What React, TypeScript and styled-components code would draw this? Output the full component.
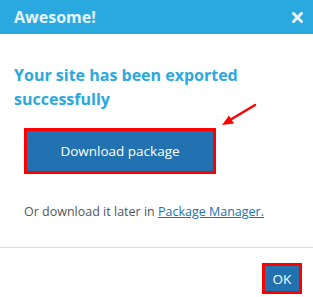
import React from 'react';
import styled, { createGlobalStyle } from 'styled-components';

const GlobalStyle = createGlobalStyle`
  html, body {
    margin: 0;
    padding: 0;
    background: #ffffff;
  }
  body {
    font-family: 'Open Sans', 'Noto Sans', sans-serif;
  }
`;

const Modal = styled.div`
  width: 313px;
  height: 297px;
  background: #ffffff;
  display: flex;
  flex-direction: column;
`;

const Header = styled.header`
  height: 34px;
  flex: none;
  background: #29a9e0;
  display: flex;
  align-items: center;
  justify-content: space-between;
  padding: 0 10px 0 14px;
  box-sizing: border-box;
`;

const Title = styled.h2`
  margin: 0;
  font-size: 16px;
  font-weight: 700;
  color: #e6f4fb;
`;

const CloseButton = styled.button`
  border: none;
  background: none;
  padding: 0;
  width: 12px;
  height: 12px;
  display: flex;
  align-items: center;
  justify-content: center;
  cursor: pointer;
`;

const Body = styled.div`
  padding: 29px 14px 0 14px;
  flex: 1;
`;

const Heading = styled.h3`
  margin: 0;
  font-size: 16px;
  line-height: 24px;
  font-weight: 700;
  color: #29a9e0;
`;

const ActionRow = styled.div`
  position: relative;
  padding: 17px 0 0 10px;
`;

const PrimaryButton = styled.button<{ $w: number; $h: number }>`
  width: ${p => p.$w}px;
  height: ${p => p.$h}px;
  background: #2271b1;
  border: 3px solid #ff0000;
  color: #ffffff;
  font-family: 'Open Sans', 'Noto Sans', sans-serif;
  font-size: 13.5px;
  padding: 0;
  box-sizing: border-box;
  cursor: pointer;
`;

const Arrow = styled.svg`
  position: absolute;
  left: 206px;
  top: -8px;
`;

const Note = styled.p`
  margin: 29px 0 0 10px;
  font-size: 12.5px;
  color: #50575e;
`;

const Link = styled.a`
  color: #2271b1;
  text-decoration: underline;
`;

const Footer = styled.footer`
  flex: none;
  border-top: 1px solid #dcdcde;
  height: 50px;
  display: flex;
  align-items: flex-start;
  justify-content: flex-end;
  padding: 15px 11px 0 0;
  box-sizing: border-box;
`;

export default function App() {
  return (
    <>
      <GlobalStyle />
      <Modal>
        <Header>
          <Title>Awesome!</Title>
          <CloseButton aria-label="Close">
            <svg width="11" height="11" viewBox="0 0 11 11">
              <path d="M1.5 1.5 L9.5 9.5 M9.5 1.5 L1.5 9.5" stroke="#eaf6fc" strokeWidth="3" strokeLinecap="square" />
            </svg>
          </CloseButton>
        </Header>
        <Body>
          <Heading>
            Your site has been exported
            <br />
            successfully
          </Heading>
          <ActionRow>
            <PrimaryButton $w={192} $h={46}>Download package</PrimaryButton>
            <Arrow width="40" height="26" viewBox="0 0 40 26">
              <line x1="35" y1="2" x2="10" y2="17" stroke="#ff0000" strokeWidth="2.5" strokeLinecap="round" />
              <polygon points="2,22 9,12.5 14,20.5" fill="#ff0000" />
            </Arrow>
          </ActionRow>
          <Note>
            Or download it later in <Link href="#">Package Manager.</Link>
          </Note>
        </Body>
        <Footer>
          <PrimaryButton $w={40} $h={31}>OK</PrimaryButton>
        </Footer>
      </Modal>
    </>
  );
}
